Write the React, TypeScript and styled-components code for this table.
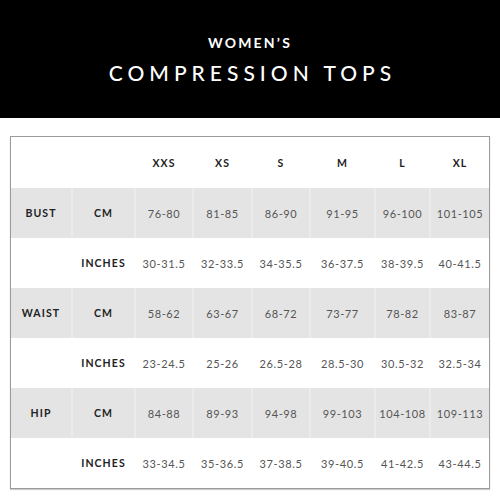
import React from 'react'
import { styled, createGlobalStyle } from 'styled-components'

const sizes = ['XXS', 'XS', 'S', 'M', 'L', 'XL']

const rows = [
  { label: 'BUST', unit: 'CM', values: ['76-80', '81-85', '86-90', '91-95', '96-100', '101-105'] },
  { label: '', unit: 'INCHES', values: ['30-31.5', '32-33.5', '34-35.5', '36-37.5', '38-39.5', '40-41.5'] },
  { label: 'WAIST', unit: 'CM', values: ['58-62', '63-67', '68-72', '73-77', '78-82', '83-87'] },
  { label: '', unit: 'INCHES', values: ['23-24.5', '25-26', '26.5-28', '28.5-30', '30.5-32', '32.5-34'] },
  { label: 'HIP', unit: 'CM', values: ['84-88', '89-93', '94-98', '99-103', '104-108', '109-113'] },
  { label: '', unit: 'INCHES', values: ['33-34.5', '35-36.5', '37-38.5', '39-40.5', '41-42.5', '43-44.5'] },
]

const App = () => {
  return (
    <Page>
      <GlobalStyle />
      <Banner>
        <Kicker>WOMEN’S</Kicker>
        <Title>COMPRESSION TOPS</Title>
      </Banner>
      <Chart>
        <Row $height={51}>
          <Cell />
          <Cell />
          {sizes.map((s) => (
            <HeadCell key={s}>{s}</HeadCell>
          ))}
        </Row>
        {rows.map((r, i) => (
          <Row key={i} $shaded={i % 2 === 0}>
            <HeadCell>{r.label}</HeadCell>
            <HeadCell>{r.unit}</HeadCell>
            {r.values.map((v) => (
              <Cell key={v}>{v}</Cell>
            ))}
          </Row>
        ))}
      </Chart>
    </Page>
  )
}

export default App

const GlobalStyle = createGlobalStyle`
  body {
    margin: 0;
    background: #fff;
    font-family: Lato, "Liberation Sans", sans-serif;
  }
`
const Page = styled.div`
  width: 500px;
  height: 500px;
  display: flex;
  flex-direction: column;
`
const Banner = styled.div`
  height: 118px;
  background: #000;
  color: #fff;
  display: flex;
  flex-direction: column;
  align-items: center;
  justify-content: center;
  padding-top: 2px;
  box-sizing: border-box;
`
const Kicker = styled.div`
  font-size: 14px;
  font-weight: 700;
  letter-spacing: 2.2px;
  line-height: 16px;
`
const Title = styled.div`
  font-size: 21px;
  font-weight: 500;
  letter-spacing: 5px;
  margin-right: -5px;
  line-height: 24px;
  margin-top: 10px;
`
const Chart = styled.div`
  margin: 18px 10px 0 10px;
  border: 1px solid #9a9a9a;
  box-shadow: 0 1px 1px #ccc;
`
const Row = styled.div<{ $shaded?: boolean; $height?: number }>`
  display: grid;
  grid-template-columns: 60px 63px 58px 59px 58px 65px 55px 60px;
  height: ${(p) => p.$height ?? 50}px;
  background: ${(p) => (p.$shaded ? '#e4e4e4' : '#fff')};
  & > div + div {
    border-left: 2px solid ${(p) => (p.$shaded ? '#ebebeb' : '#fff')};
  }
`
const Cell = styled.div`
  display: flex;
  align-items: center;
  justify-content: center;
  font-size: 11px;
  font-weight: 400;
  color: #555;
  letter-spacing: 0.6px;
  white-space: nowrap;
`
const HeadCell = styled(Cell)`
  font-weight: 700;
  color: #222;
  font-size: 10.5px;
  letter-spacing: 1.1px;
`
